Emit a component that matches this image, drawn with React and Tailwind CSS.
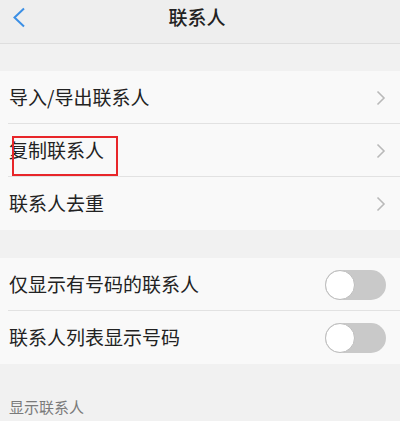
const LinkRow = ({ label, boxed, last }) => {
    return (
        <div className="relative h-[53px] flex flex-row items-center pl-[9px] pr-[14px]">
            <p className="flex-1 text-[19px] text-[#222]">{label}</p>
            <svg width="10" height="16" viewBox="0 0 10 16" fill="none">
                <path d="M1.5 1.5 L8 8 L1.5 14.5" stroke="#b9b9b9" strokeWidth="1.6" />
            </svg>
            {boxed && <div className="absolute left-[12px] top-[12px] w-[106px] h-[40px] border-2 border-[#e8262a]"></div>}
            {!last && <div className="absolute left-[8px] right-0 bottom-0 h-px bg-[#e2e2e2]"></div>}
        </div>
    );
}

const SwitchRow = ({ label, last }) => {
    return (
        <div className="relative h-[53px] flex flex-row items-center pl-[9px] pr-[14px]">
            <p className="flex-1 text-[19px] text-[#222]">{label}</p>
            <div className="w-[61px] h-[30px] rounded-full bg-[#c9c9c9] flex flex-row items-center">
                <div className="w-[30px] h-[30px] rounded-full bg-white border border-[#bdbdbd]"></div>
            </div>
            {!last && <div className="absolute left-[8px] right-0 bottom-0 h-px bg-[#e2e2e2]"></div>}
        </div>
    );
}

const App = () => {
    return (
        <div className="w-[400px] h-[421px] overflow-hidden bg-[#f1f1f1] flex flex-col" style={{ fontFamily: '"Noto Sans CJK SC", "Noto Sans", sans-serif' }}>
            <div className="relative h-[44px] shrink-0 bg-[#eeeeee] border-b border-[#dedede] flex flex-row items-center justify-center pb-[9px]">
                <svg className="absolute left-[12px] top-[7px]" width="14" height="21" viewBox="0 0 14 21" fill="none">
                    <path d="M12 1.5 L2.5 10.5 L12 19.5" stroke="#3b8fe5" strokeWidth="2" />
                </svg>
                <p className="text-[19px] font-medium text-[#222] -ml-[6px]">联系人</p>
            </div>

            <div className="h-[27px] shrink-0"></div>

            <div className="bg-[#f9f9f9] flex flex-col">
                <LinkRow label="导入/导出联系人" />
                <LinkRow label="复制联系人" boxed />
                <LinkRow label="联系人去重" last />
            </div>

            <div className="h-[28px] shrink-0"></div>

            <div className="bg-[#f9f9f9] flex flex-col">
                <SwitchRow label="仅显示有号码的联系人" />
                <SwitchRow label="联系人列表显示号码" last />
            </div>

            <div className="pt-[32px] pl-[9px]">
                <p className="text-[15px] leading-[22px] text-[#7a7a7a]">显示联系人</p>
            </div>
        </div>
    );
}

export default App;
